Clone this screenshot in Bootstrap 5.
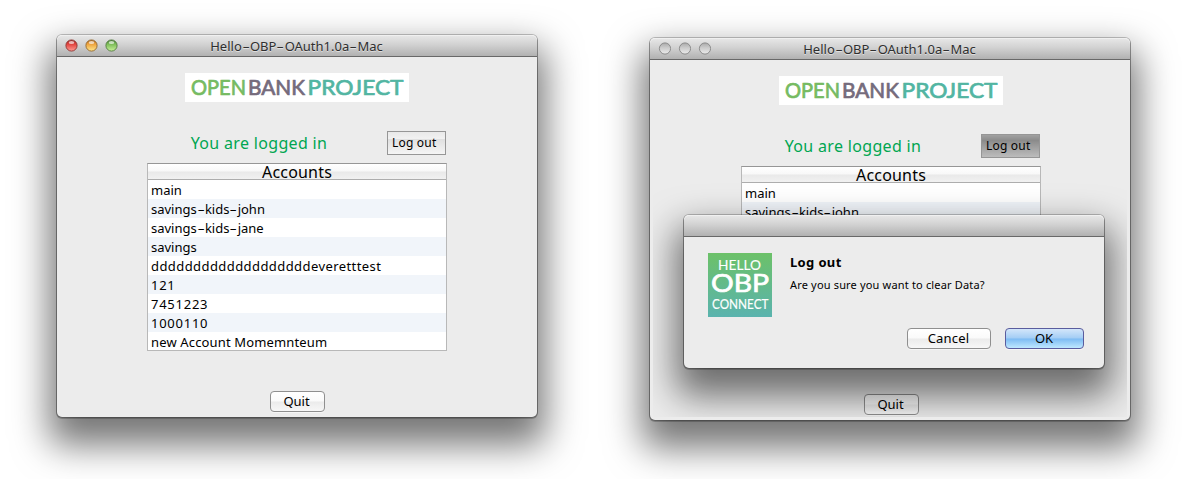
<!DOCTYPE html>
<html lang="en">
<head>
<meta charset="utf-8">
<meta name="viewport" content="width=device-width, initial-scale=1">
<title>Hello-OBP-OAuth1.0a-Mac</title>
<link href="https://cdn.jsdelivr.net/npm/bootstrap@5.3.0/dist/css/bootstrap.min.css" rel="stylesheet">
<style>
body{font-family:"Noto Sans","Open Sans",sans-serif;font-size:13px;line-height:19px;color:#000;background:#fff;width:1182px;height:479px}
.desk{padding:35px 0 0 57px;gap:113px;height:479px}
.win,.dlg{border-radius:5px;background:#ececec;box-shadow:0 0 0 1px rgba(0,0,0,.22),0 1px 0 1px rgba(0,0,0,.2),0 20px 36px 8px rgba(0,0,0,.54)}
.win{width:480px;height:382px}
.win.back{margin-top:3px}
.back .cont{margin:0 -1px 0 1px}
.bar{height:22px;border-radius:5px 5px 0 0;background:linear-gradient(#e8e8e8,#d2d2d2 45%,#b1b1b1);border-bottom:1px solid #686868;box-shadow:inset 0 1px #f0f0f0}
.lights{left:7.5px;top:4px;gap:7px}
.lamp{width:13px;height:13px;display:block}
.ttl{font-size:13px;line-height:22px;color:#2f2f2f;text-shadow:0 1px rgba(255,255,255,.5);white-space:nowrap;margin-left:-1px}
.dash{display:inline-block;transform:scaleX(1.75);margin:0 2px}
.logo{width:224px;height:29px;background:#fff}
.cont{padding-top:16px}
.inner{width:300px;margin:0 0 0 90px}
.status{height:24px;margin-top:29px;padding-right:1px}
.msg{color:#00a651;font-size:16px;line-height:24px;width:224px;letter-spacing:.32px}
.lo{width:59px;height:24px;border:1px solid #969696;border-radius:0;padding:0 0 0 4px;font-size:12px;line-height:22px;text-align:left;letter-spacing:.2px;white-space:nowrap;color:#000;background:linear-gradient(#e9e9e9,#f1f1f1 30%,#dfdfdf 32%,#f5f5f5)}
.lo.down{background:linear-gradient(#a1a1a1,#8b8b8b 25%,#929292 35%,#bcbcbc)}
.tbl{width:300px;height:188px;margin-top:8px;border:1px solid #b8b8b8;border-top-color:#969696;background:#fff}
.tbl .hd{height:16px;border-bottom:1px solid #adadad;font-size:16px;line-height:17px;letter-spacing:.2px;background:linear-gradient(#fff,#f8f8f8 48%,#e9e9e9 52%,#f1f1f1)}
.tbl .rw{height:19px;padding-left:3px;line-height:20px;white-space:nowrap}
.tbl .rw:last-child{height:18px}
.tbl .rw:nth-child(odd){background:#f1f5fa}
.tbl .num{letter-spacing:.75px}
.tbl .wide{letter-spacing:.42px}
.tbl .mid{letter-spacing:.15px}
.push{height:21px;border:1px solid #8f8f8f;border-radius:4px;padding:0 1px 0 0;font-size:13px;line-height:19px;color:#000;background:linear-gradient(#fff,#fafafa 48%,#ebebeb 52%,#f7f7f7);box-shadow:0 1px rgba(255,255,255,.5)}
.quit{width:55px;margin-top:40px}
.veil{inset:22px 3px 3px 3px}
.dlg{left:31px;top:155px;width:420px;height:153px}
.appicon{width:64px;height:64px}
.dbody{padding:16px 21px 0 24px;gap:18px}
.dh{font-size:13px;line-height:19px;letter-spacing:.35px}
.dp{font-size:11px;line-height:16px;margin-top:5px;letter-spacing:.17px}
.dbtns{padding:11px 20px 0 0;gap:14px}
.cancel{width:84px;letter-spacing:.2px}
.ok{width:79px;border-color:#5a5c9e;background:linear-gradient(#d3e6fa,#a3cdf5 48%,#7dbbf3 52%,#bfe8ff)}
</style>
</head>
<body class="overflow-hidden">
<svg width="0" height="0" class="position-absolute" aria-hidden="true">
<defs>
<linearGradient id="red" x2="0" y2="1"><stop stop-color="#8e2a26"/><stop offset=".35" stop-color="#e0403b"/><stop offset="1" stop-color="#ff9c94"/></linearGradient>
<linearGradient id="amber" x2="0" y2="1"><stop stop-color="#a3631d"/><stop offset=".35" stop-color="#eda03a"/><stop offset="1" stop-color="#ffe88c"/></linearGradient>
<linearGradient id="green" x2="0" y2="1"><stop stop-color="#40752d"/><stop offset=".35" stop-color="#79ba55"/><stop offset="1" stop-color="#c9f29a"/></linearGradient>
<linearGradient id="grey" x2="0" y2="1"><stop stop-color="#a9a9a9"/><stop offset=".4" stop-color="#c9c9c9"/><stop offset="1" stop-color="#ececec"/></linearGradient>
<linearGradient id="app" x2="0" y2="1"><stop stop-color="#6cc168"/><stop offset="1" stop-color="#5ab3ae"/></linearGradient>
<symbol id="obp" viewBox="0 0 224 29">
<g font-family="Lato" font-size="20.5" stroke-width=".7" stroke-linejoin="round">
<text x="6" y="21.600" textLength="55" lengthAdjust="spacingAndGlyphs" fill="#76bb62" stroke="#76bb62">OPEN</text>
<text x="63" y="21.600" textLength="57" lengthAdjust="spacingAndGlyphs" fill="#756b7c" stroke="#756b7c">BANK</text>
<text x="122.500" y="21.600" textLength="96" lengthAdjust="spacingAndGlyphs" fill="#52b5a2" stroke="#52b5a2">PROJECT</text>
</g></symbol>
</defs></svg>
<main class="desk d-flex align-items-start">
<section class="win">
<header class="bar position-relative text-center">
<div class="lights position-absolute d-flex">
<svg class="lamp" viewBox="0 0 13 13"><circle cx="6.5" cy="6.5" r="5.6" fill="url(#red)" stroke="#8c3632" stroke-width=".9"/><ellipse cx="6.5" cy="3.4" rx="2.8" ry="1.5" fill="#fff" opacity=".65"/></svg>
<svg class="lamp" viewBox="0 0 13 13"><circle cx="6.5" cy="6.5" r="5.6" fill="url(#amber)" stroke="#93672c" stroke-width=".9"/><ellipse cx="6.5" cy="3.4" rx="2.8" ry="1.5" fill="#fff" opacity=".65"/></svg>
<svg class="lamp" viewBox="0 0 13 13"><circle cx="6.5" cy="6.5" r="5.6" fill="url(#green)" stroke="#527a42" stroke-width=".9"/><ellipse cx="6.5" cy="3.4" rx="2.8" ry="1.5" fill="#fff" opacity=".65"/></svg>
</div>
<span class="ttl">Hello<span class="dash">-</span>OBP<span class="dash">-</span>OAuth1.0a<span class="dash">-</span>Mac</span>
</header>
<div class="cont">
<svg class="logo d-block mx-auto"><use href="#obp"/></svg>
<div class="inner">
<div class="status d-flex justify-content-between"><div class="msg text-center">You are logged in</div><button class="lo">Log out</button></div>
<div class="tbl"><div class="hd text-center"><span>Accounts</span></div><div class="rw">main</div><div class="rw">savings<span class="dash">-</span>kids<span class="dash">-</span>john</div><div class="rw">savings<span class="dash">-</span>kids<span class="dash">-</span>jane</div><div class="rw">savings</div><div class="rw wide">dddddddddddddddddddeveretttest</div><div class="rw num">121</div><div class="rw num">7451223</div><div class="rw num">1000110</div><div class="rw mid">new Account Momemnteum</div></div>
</div>
<button class="push quit d-block mx-auto">Quit</button>
</div>
</section>
<section class="win back position-relative">
<header class="bar position-relative text-center">
<div class="lights position-absolute d-flex">
<svg class="lamp" viewBox="0 0 13 13"><circle cx="7" cy="6.500" r="5.600" fill="url(#grey)" stroke="#858585" stroke-width=".9"/></svg>
<svg class="lamp" viewBox="0 0 13 13"><circle cx="7" cy="6.500" r="5.600" fill="url(#grey)" stroke="#858585" stroke-width=".9"/></svg>
<svg class="lamp" viewBox="0 0 13 13"><circle cx="7" cy="6.500" r="5.600" fill="url(#grey)" stroke="#858585" stroke-width=".9"/></svg>
</div>
<span class="ttl">Hello<span class="dash">-</span>OBP<span class="dash">-</span>OAuth1.0a<span class="dash">-</span>Mac</span>
</header>
<div class="cont">
<svg class="logo d-block mx-auto"><use href="#obp"/></svg>
<div class="inner">
<div class="status d-flex justify-content-between"><div class="msg text-center">You are logged in</div><button class="lo down">Log out</button></div>
<div class="tbl"><div class="hd text-center"><span>Accounts</span></div><div class="rw">main</div><div class="rw">savings<span class="dash">-</span>kids<span class="dash">-</span>john</div></div>
</div>
<button class="push quit d-block mx-auto">Quit</button>
</div>
<div class="veil position-absolute overflow-hidden">
<div class="dlg position-absolute" role="dialog">
<div class="bar"></div>
<div class="dbody d-flex">
<svg class="appicon" viewBox="0 0 64 64"><path fill="url(#app)" d="M0 0h64v64H0z"/>
<g font-family="Lato" fill="#fff" stroke="#fff" stroke-linejoin="round">
<text x="10" y="17" font-size="12.5" stroke-width=".1" textLength="43" lengthAdjust="spacingAndGlyphs">HELLO</text>
<text x="3" y="38.800" font-size="25" stroke-width=".7" textLength="58" lengthAdjust="spacingAndGlyphs">OBP</text>
<text x="4" y="55.500" font-size="12.5" stroke-width=".15" textLength="56.500" lengthAdjust="spacingAndGlyphs">CONNECT</text>
</g></svg>
<div><div class="dh fw-bold">Log out</div><div class="dp">Are you sure you want to clear Data?</div></div>
</div>
<div class="dbtns d-flex justify-content-end"><button class="push cancel">Cancel</button><button class="push ok">OK</button></div>
</div>
</div>
</section>
</main>
<script src="https://cdn.jsdelivr.net/npm/bootstrap@5.3.0/dist/js/bootstrap.bundle.min.js"></script>
</body>
</html>
